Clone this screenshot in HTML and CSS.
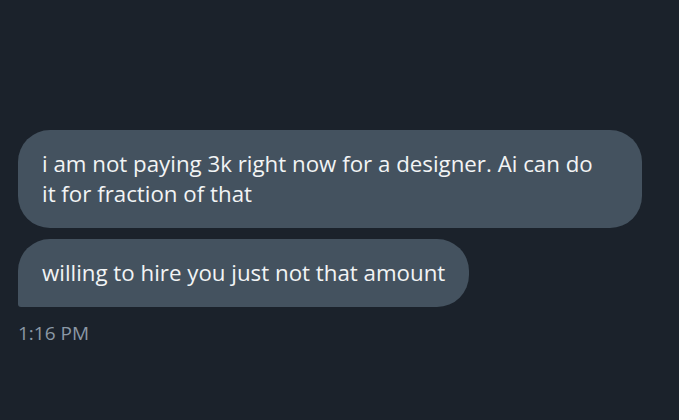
FILE: index.html
```html
<!DOCTYPE html>
<html lang="en">
<head>
    <meta charset="UTF-8">
    <meta name="viewport" content="width=device-width, initial-scale=1.0">
    <title>Messages</title>
    <link rel="stylesheet" href="styles.css">
</head>
<body>
    <div class="conversation">
        <div class="bubble first">i am not paying 3k right now for a designer. Ai can do it for fraction of that</div>
        <div class="bubble last">willing to hire you just not that amount</div>
        <div class="time">1:16 PM</div>
    </div>
</body>
</html>
```

FILE: styles.css
```css
body {
    margin: 0;
    background-color: #1b222b;
    font-family: "Open Sans", "Noto Sans", sans-serif;
    height: 420px;
    overflow: hidden;
}
.conversation {
    display: flex;
    flex-direction: column;
    align-items: flex-start;
    gap: 11px;
    padding: 130px 0 0 18px;
}
.bubble {
    box-sizing: border-box;
    max-width: 624px;
    background-color: #44525f;
    color: #f2f4f5;
    font-size: 22.3px;
    line-height: 30px;
    padding: 19px 24px;
    border-radius: 32px;
}
.bubble.first {
    width: 624px;
    padding-right: 40px;
}
.bubble.last {
    border-bottom-left-radius: 3px;
}
.time {
    color: #8b98a5;
    font-size: 19px;
    line-height: 26px;
    margin-top: 2px;
}
```
